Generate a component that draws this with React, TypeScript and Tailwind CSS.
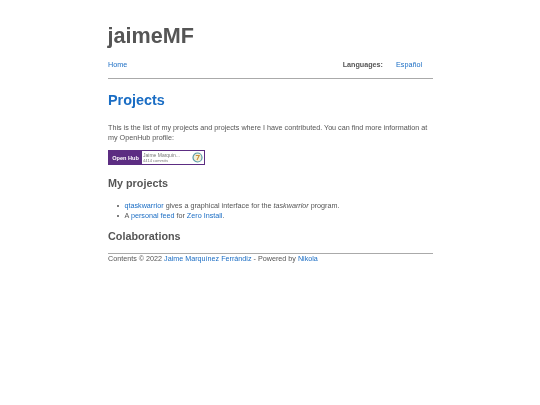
import React from "react";

const link = "text-[#1a6dc4]";

const Item = ({ children }: { children: React.ReactNode }) => (
  <li className="flex items-center">
    <span className="mr-[5.5px] h-[2px] w-[2px] rounded-full bg-[#555]" />
    <span>{children}</span>
  </li>
);

export default function App() {
  return (
    <div className="min-h-[405px] bg-white font-['Liberation_Sans',sans-serif] text-[7.2px] leading-[10px] text-[#555]">
      <div className="mx-auto w-[325px] pt-[23px] will-change-transform">
        <header>
          <h1 className="-ml-[0.5px] text-[21.6px] leading-[26px] font-bold text-[#555]">jaimeMF</h1>
          <nav className="mt-[6px] flex h-[24px] items-center justify-between border-b border-[#aaa] pb-[3px]">
            <a className={link}>Home</a>
            <div className="flex pr-[11px]">
              <b className="font-bold">Languages:</b>
              <a className={`ml-[13px] ${link}`}>Español</a>
            </div>
          </nav>
        </header>
        <main>
          <h2 className="mt-[12px] text-[14.4px] leading-[18px] font-bold text-[#1a6dc4]">Projects</h2>
          <p className="mt-[14px] leading-[10px]">
            This is the list of my projects and projects where I have contributed. You can find more information at my OpenHub profile:
          </p>
          <div className="mt-[7px] flex h-[15px] w-[97px] border border-[#5c2d82] bg-white">
            <div className="flex w-[33px] items-center justify-center bg-[#5c2d82] text-[5.6px] font-bold text-white">Open Hub</div>
            <div className="flex flex-1 items-center justify-between px-[1px]">
              <div className="text-[#777]">
                <div className="text-[5px] leading-[6px]">Jaime Marquin...</div>
                <div className="text-[4px] leading-[5px]">4414 commits</div>
              </div>
              <svg width="11" height="11" viewBox="0 0 11 11">
                <circle cx="5.5" cy="5.5" r="4.5" fill="#f4f1d8" stroke="#5a9aa8" strokeWidth="1.2" />
                <path d="M3.8 3.5h3.4L5 8" fill="none" stroke="#c8923a" strokeWidth="1.1" />
              </svg>
            </div>
          </div>
          <h3 className="mt-[11px] text-[10.8px] leading-[14px] font-bold">My projects</h3>
          <ul className="mt-[11px] pl-[9px] leading-[9.7px]">
            <Item>
              <a className={link}>qtaskwarrior</a> gives a graphical interface for the <i>taskwarrior</i> program.
            </Item>
            <Item>
              A <a className={link}>personal feed</a> for <a className={link}>Zero Install</a>.
            </Item>
          </ul>
          <h3 className="mt-[9px] text-[10.8px] leading-[14px] font-bold">Colaborations</h3>
        </main>
        <footer className="mt-[10px] border-t border-[#aaa]">
          Contents © 2022 <a className={link}>Jaime Marquínez Ferrándiz</a> - Powered by <a className={link}>Nikola</a>
        </footer>
      </div>
    </div>
  );
}
